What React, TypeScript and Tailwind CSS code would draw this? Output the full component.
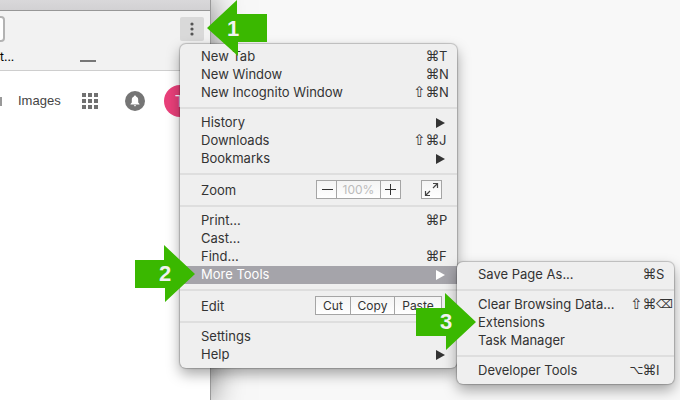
import type { ReactNode } from "react";

function Keys({ mods, letter }: { mods?: string; letter: string }) {
  return (
    <span className="ml-auto flex items-center">
      <span className="flex font-['DejaVu_Sans',sans-serif] text-[14px]">
        {(mods ?? "").split("").map((m) => (
          <span
            key={m}
            className={`flex w-[13px] justify-center ${
              m === "⌥" ? "text-[12px]" : m === "⌘" ? "" : "text-[15px]"
            }`}
          >
            {m}
          </span>
        ))}
      </span>
      <span className={letter === "⌫" ? "flex w-[18px] font-['DejaVu_Sans',sans-serif] text-[12px]" : "w-[18px]"}>
        {letter}
      </span>
    </span>
  );
}

function Triangle() {
  return (
    <svg className="mt-[2px] mr-3 ml-auto h-[10px] w-[9px]" viewBox="0 0 9 10" fill="currentColor" aria-hidden="true">
      <path d="M0 0L9 5L0 10Z" />
    </svg>
  );
}

function Item({ label, active, children }: { label: string; active?: boolean; children?: ReactNode }) {
  return (
    <button
      type="button"
      role="menuitem"
      className={`flex h-[18px] w-full items-center whitespace-nowrap pb-[2px] pl-[21px] text-left leading-4 ${
        active ? "bg-[#a5a4aa] text-white" : ""
      }`}
    >
      {label}
      {children}
    </button>
  );
}

function Separator() {
  return (
    <div role="separator" className="flex h-3 items-center">
      <div className="h-[2px] w-full bg-[#dedede]" />
    </div>
  );
}

const menuClass =
  "absolute rounded-md bg-[#efefef] py-1 text-[13px] text-[#333] shadow-[0_0_1px_1px_rgba(0,0,0,0.2),0_6px_14px_rgba(0,0,0,0.35)]";
const boxClass = "border border-[#a5a5a5] bg-linear-to-b from-[#f4f4f4] to-white";

function Marker({ n, place, left }: { n: number; place: string; left?: boolean }) {
  return (
    <div className={`absolute h-[57px] w-[60px] ${place}`}>
      <svg className="absolute inset-0" width="60" height="57" viewBox="0 0 60 57" fill="#3ab800" aria-hidden="true">
        <path d={left ? "M0 28L30 0V14H60V42H31V56Z" : "M60 29L29 0V15H0V43H30V57Z"} />
      </svg>
      <span
        className={`relative flex h-full items-center pb-px font-['Liberation_Sans',Arial,sans-serif] text-[22px] font-bold text-[#f2f2f2] ${
          left ? "pl-5" : "pl-6"
        }`}
      >
        {n}
      </span>
    </div>
  );
}

function BrowserWindow() {
  return (
    <div className="relative h-screen w-[211px] overflow-hidden border-r border-[#999] bg-white text-[13px] shadow-[0_0_32px_rgba(0,0,0,0.55)]">
      <div className="h-[11px] border-b border-[#979797] bg-linear-to-b from-[#d9d8da] to-[#d2d1d3]" />
      <div className="h-[60px] border-b border-[#cecece] bg-[#f2f2f2]">
        <div className="flex h-9 items-center justify-between pr-[6px]">
          <input
            aria-label="Address"
            className="-ml-4 h-[26px] w-[21px] rounded-[4px] border-2 border-[#b3b3b3] bg-white"
          />
          <button
            type="button"
            aria-label="Customize and control"
            className="flex h-6 w-6 items-center justify-center rounded-xs bg-[#d9d9d9]"
          >
            <svg width="4" height="14" viewBox="0 0 4 14" fill="#555" aria-hidden="true">
              <circle cx="2" cy="2" r="1.6" />
              <circle cx="2" cy="7" r="1.6" />
              <circle cx="2" cy="12" r="1.6" />
            </svg>
          </button>
        </div>
        <div className="flex h-5 items-center text-[12px] text-black">
          <span>t...</span>
          <div className="mt-2 ml-[66px] h-[2px] w-4 bg-[#777]" />
        </div>
      </div>
      <div className="flex h-[60px] items-center text-[#444]">
        <div className="h-[9px] w-[2px] bg-[#999]" />
        <a href="#images" className="ml-4 w-16 font-['Liberation_Sans',Arial,sans-serif]">
          Images
        </a>
        <button type="button" aria-label="Apps" className="grid grid-cols-3 gap-[2px]">
          {Array.from({ length: 9 }, (_, i) => (
            <span key={i} className="h-1 w-1 bg-[#717171]" />
          ))}
        </button>
        <button
          type="button"
          aria-label="Notifications"
          className="ml-[27px] flex h-5 w-5 items-center justify-center rounded-full bg-[#757575]"
        >
          <svg width="10" height="12" viewBox="0 0 10 12" fill="white" aria-hidden="true">
            <path d="M5 0.5C5.7 0.5 6 1 6 1.6C7.5 2 8.2 3.2 8.2 4.8V7.6L9.5 9V9.6H0.5V9L1.8 7.6V4.8C1.8 3.2 2.5 2 4 1.6C4 1 4.3 0.5 5 0.5ZM3.9 10.2H6.1C6.1 11.6 3.9 11.6 3.9 10.2Z" />
          </svg>
        </button>
        <div className="ml-[19px] flex h-8 w-8 shrink-0 items-center justify-center rounded-full bg-[#e9407a] text-[16px] text-white">
          T
        </div>
      </div>
    </div>
  );
}

export default function App() {
  return (
    <main className="relative h-screen w-full overflow-hidden bg-[#f8f8f8] font-[Inter,'Liberation_Sans',sans-serif]">
      <BrowserWindow />

      <div role="menu" aria-label="Browser menu" className={`${menuClass} top-11 left-[180px] w-[277px]`}>
        <Item label="New Tab"><Keys mods="⌘" letter="T" /></Item>
        <Item label="New Window"><Keys mods="⌘" letter="N" /></Item>
        <Item label="New Incognito Window"><Keys mods="⇧⌘" letter="N" /></Item>
        <Separator />
        <Item label="History"><Triangle /></Item>
        <Item label="Downloads"><Keys mods="⇧⌘" letter="J" /></Item>
        <Item label="Bookmarks"><Triangle /></Item>
        <Separator />
        <div className="flex h-5 items-start pr-[15px] pl-[21px]">
          <span className="leading-5">Zoom</span>
          <div className={`ml-auto flex h-[19px] ${boxClass}`}>
            <button type="button" aria-label="Zoom out" className="flex w-5 items-center justify-center border-r border-[#a5a5a5]">
              <svg width="12" height="12" stroke="#333" aria-hidden="true"><path d="M1 5.5H12" /></svg>
            </button>
            <span className="w-[43px] text-center text-[12px] leading-[18px] text-[#bbb]">100%</span>
            <button type="button" aria-label="Zoom in" className="flex w-5 items-center justify-center border-l border-[#a5a5a5]">
              <svg width="12" height="12" stroke="#333" aria-hidden="true"><path d="M0 5.5H11M5.5 0V11" /></svg>
            </button>
          </div>
          <button type="button" aria-label="Full screen" className={`ml-5 flex h-[19px] w-[21px] items-center justify-center ${boxClass}`}>
            <svg width="15" height="15" fill="none" stroke="#444" strokeWidth="1.2" aria-hidden="true">
              <path d="M9 1.5H13.5V6M13.5 1.5L9 6M1.5 9V13.5H6M1.5 13.5L6 9" />
            </svg>
          </button>
        </div>
        <Separator />
        <Item label="Print..."><Keys mods="⌘" letter="P" /></Item>
        <Item label="Cast..." />
        <Item label="Find..."><Keys mods="⌘" letter="F" /></Item>
        <Item label="More Tools" active><Triangle /></Item>
        <Separator />
        <div className="flex h-5 items-start pr-[15px] pl-[21px]">
          <span className="leading-5">Edit</span>
          <div className={`ml-auto flex h-[19px] divide-x divide-[#a5a5a5] text-[12px] leading-[18px] ${boxClass}`}>
            <button type="button" className="w-[35px]">Cut</button>
            <button type="button" className="w-11">Copy</button>
            <button type="button" className="w-[46px]">Paste</button>
          </div>
        </div>
        <Separator />
        <Item label="Settings" />
        <Item label="Help"><Triangle /></Item>
      </div>

      <div role="menu" aria-label="More Tools" className={`${menuClass} top-[262px] left-[457px] w-[217px]`}>
        <Item label="Save Page As..."><Keys mods="⌘" letter="S" /></Item>
        <Separator />
        <Item label="Clear Browsing Data..."><Keys mods="⇧⌘" letter="⌫" /></Item>
        <Item label="Extensions" />
        <Item label="Task Manager" />
        <Separator />
        <Item label="Developer Tools"><Keys mods="⌥⌘" letter="I" /></Item>
      </div>

      <Marker n={1} left place="top-0 left-[207px]" />
      <Marker n={2} place="top-[245px] left-[135px]" />
      <Marker n={3} place="top-[293px] left-[416px]" />
    </main>
  );
}
